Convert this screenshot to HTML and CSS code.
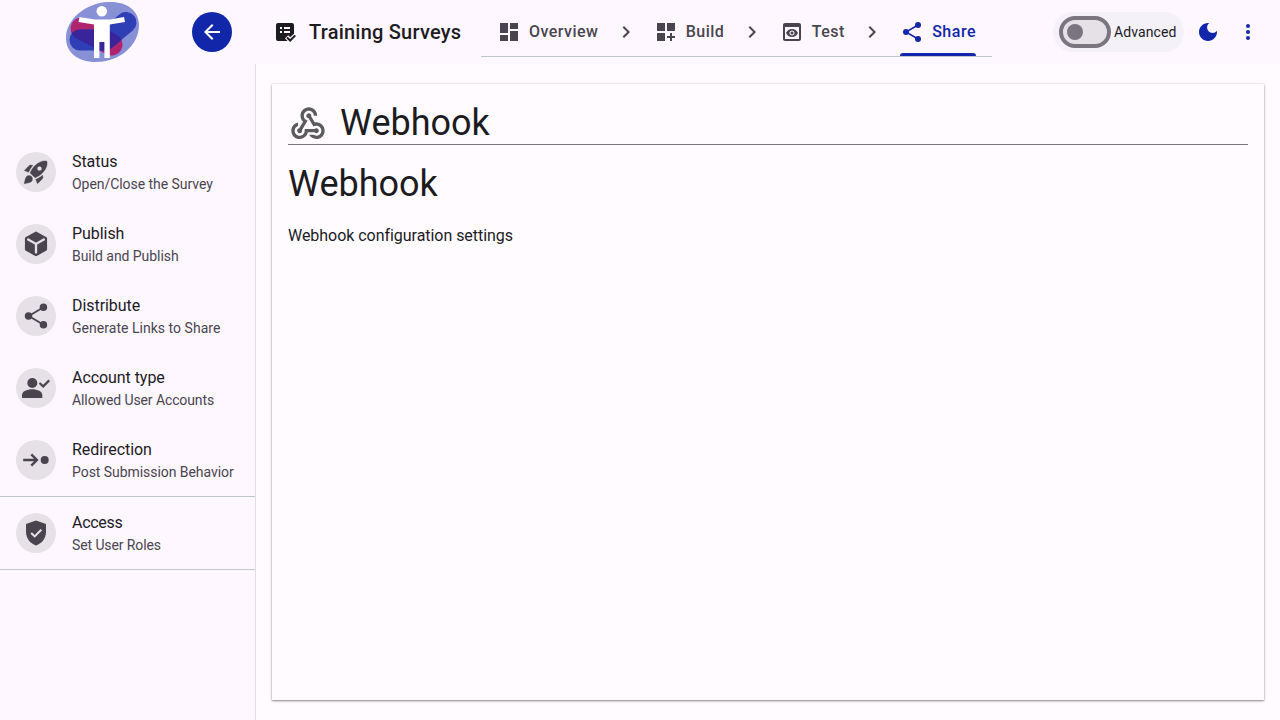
FILE: index.html
```html
<!DOCTYPE html>
<html lang="en">
<head>
<meta charset="utf-8">
<title>Training Surveys</title>
<link rel="stylesheet" href="styles.css">
</head>
<body>
<header class="header">
  <div class="brand">
    <svg class="logo" width="76" height="62" viewBox="0 0 76 62">
      <defs><clipPath id="capsule"><rect x="-28" y="-11" width="56" height="22" rx="11" transform="translate(31.5 35.5) rotate(28)"/></clipPath></defs>
      <path fill="#8890d6" d="M43 1C61 0 74 9 74 24C74 44 55 61 31 61C12 61 1 51 1 37C1 18 21 2 43 1Z"/>
      <rect fill="#b0246e" x="-28" y="-11" width="56" height="22" rx="11" transform="translate(31.5 35.5) rotate(28)"/>
      <path d="M15 39H40L61 21.5" fill="none" stroke="#2e3eb5" stroke-width="21" stroke-linecap="round" stroke-linejoin="round"/>
      <path clip-path="url(#capsule)" d="M15 39H40L61 21.5" fill="none" stroke="#3a249a" stroke-width="21" stroke-linecap="round" stroke-linejoin="round"/>
      <circle cx="36.8" cy="10.3" r="5.3" fill="#fff"/>
      <path fill="#fff" d="M14.5 16L30 18.5H45L59 16L60 21L44.8 23.5V57H39.4V41H34.4V57H29V23.5L13.5 21Z"/>
    </svg>
    <button class="back" aria-label="Back"><svg width="24" height="24" viewBox="0 0 24 24"><path fill="none" stroke="#fff" stroke-width="2" d="M12.7 4.7L5.4 12L12.7 19.3M5.4 12H20"/></svg></button>
  </div>
  <div class="title">
    <svg width="24" height="24" viewBox="0 0 24 24"><path fill="currentColor" d="M5 3H19A2 2 0 0 1 21 5V13.8L17.2 17.2L15.2 15.2L12 18.4L14.6 21H5A2 2 0 0 1 3 19V5A2 2 0 0 1 5 3Z"/><path fill="#fef7ff" d="M7 7h2v2H7zM11 7h6v2h-6zM7 11h2v2H7zM11 11h6v2h-6z"/><path fill="none" stroke="currentColor" stroke-width="2" d="M14 17.5L17.2 20.5L22.3 15.4"/></svg>
    <span>Training Surveys</span>
  </div>
  <nav class="tabs">
    <a class="tab overview"><svg width="24" height="24" viewBox="0 0 24 24"><path fill="currentColor" d="M3 13h8V3H3zm0 8h8v-6H3zm10 0h8V11h-8zm0-18v6h8V3z"/></svg><span>Overview</span></a>
    <svg class="chevron" width="24" height="24" viewBox="0 0 24 24"><path fill="currentColor" d="M10 6L8.59 7.41 13.17 12l-4.58 4.59L10 18l6-6z"/></svg>
    <a class="tab build"><svg width="24" height="24" viewBox="0 0 24 24"><path fill="currentColor" d="M3 3h8v8H3zm10 0h8v8h-8zM3 13h8v8H3zm13 0h2v3h3v2h-3v3h-2v-3h-3v-2h3z"/></svg><span>Build</span></a>
    <svg class="chevron" width="24" height="24" viewBox="0 0 24 24"><path fill="currentColor" d="M10 6L8.59 7.41 13.17 12l-4.58 4.59L10 18l6-6z"/></svg>
    <a class="tab test"><svg width="24" height="24" viewBox="0 0 24 24"><path fill="currentColor" d="M19 3H5c-1.11 0-2 .9-2 2v14c0 1.1.89 2 2 2h14c1.1 0 2-.9 2-2V5c0-1.1-.9-2-2-2zm0 16H5V7h14v12zm-5.5-6c0 .83-.67 1.5-1.5 1.5s-1.5-.67-1.5-1.5.67-1.5 1.5-1.5 1.5.67 1.5 1.5zM12 9c-2.73 0-5.06 1.66-6 4 .94 2.34 3.27 4 6 4s5.06-1.66 6-4c-.94-2.34-3.27-4-6-4zm0 6.5c-1.38 0-2.5-1.12-2.5-2.5s1.12-2.5 2.5-2.5 2.5 1.12 2.5 2.5-1.12 2.5-2.5 2.5z"/></svg><span>Test</span></a>
    <svg class="chevron" width="24" height="24" viewBox="0 0 24 24"><path fill="currentColor" d="M10 6L8.59 7.41 13.17 12l-4.58 4.59L10 18l6-6z"/></svg>
    <a class="tab share active"><svg width="24" height="24" viewBox="0 0 24 24"><path fill="none" stroke="currentColor" stroke-width="1.5" d="M18 5L6 12L18 19"/><g fill="currentColor"><circle cx="18" cy="5" r="3"/><circle cx="6" cy="12" r="3"/><circle cx="18" cy="19" r="3"/></g></svg><span>Share</span></a>
  </nav>
  <div class="actions">
    <label class="advanced"><span class="switch"><span class="knob"></span></span><span>Advanced</span></label>
    <button class="icon-button moon" aria-label="Dark mode"><svg width="24" height="24" viewBox="0 0 24 24"><path fill="currentColor" d="M12 3c-4.97 0-9 4.03-9 9s4.03 9 9 9 9-4.03 9-9c0-.46-.04-.92-.1-1.36-.98 1.37-2.58 2.26-4.4 2.26-2.98 0-5.4-2.42-5.4-5.4 0-1.81.89-3.42 2.26-4.4C12.92 3.04 12.46 3 12 3z"/></svg></button>
    <button class="icon-button" aria-label="More"><svg width="24" height="24" viewBox="0 0 24 24" fill="currentColor"><circle cx="12" cy="6" r="2"/><circle cx="12" cy="12" r="2"/><circle cx="12" cy="18" r="2"/></svg></button>
  </div>
</header>
<div class="layout">
  <aside class="sidebar">
    <a class="item"><span class="avatar"><svg width="28" height="28" viewBox="0 0 24 24"><path fill="currentColor" stroke="currentColor" stroke-width=".35" d="M9.19,6.35c-2.04,2.29-3.44,5.58-3.57,5.89L2,10.69l4.05-4.05c0.47-0.47,1.15-0.68,1.81-0.55L9.19,6.35z M11.17,17c0,0,3.74-1.55,5.89-3.7c5.4-5.4,4.5-9.62,4.21-10.57c-0.95-0.3-5.17-1.19-10.57,4.21C8.55,9.09,7,12.83,7,12.83L11.17,17z M17.65,14.81c-2.29,2.04-5.58,3.44-5.89,3.57L13.31,22l4.05-4.05c0.47-0.47,0.68-1.15,0.55-1.81L17.65,14.81z M9,18c0,0.83-0.34,1.58-0.88,2.12C6.94,21.3,2,22,2,22s0.7-4.94,1.88-6.12C4.42,15.34,5.17,15,6,15C7.66,15,9,16.34,9,18z M13,9c0-1.1,0.9-2,2-2s2,0.9,2,2s-0.9,2-2,2S13,10.1,13,9z"/></svg></span><span class="text"><span class="name">Status</span><span class="note">Open/Close the Survey</span></span></a>
    <a class="item"><span class="avatar"><svg width="28" height="28" viewBox="0 0 24 24"><path fill="currentColor" stroke="currentColor" stroke-width="2" stroke-linejoin="round" d="M12 2.4L20.5 7.1V16.8L12 21.5L3.5 16.8V7.1Z"/><path fill="none" stroke="#e6e1e6" stroke-width="2" stroke-linecap="round" d="M5.3 8.2L12 12L18.7 8.2M12 12V19.3"/></svg></span><span class="text"><span class="name">Publish</span><span class="note">Build and Publish</span></span></a>
    <a class="item"><span class="avatar"><svg width="28" height="28" viewBox="0 0 24 24"><path fill="none" stroke="currentColor" stroke-width="1.6" d="M18.5 4.5L5.8 12L18.5 19.5"/><g fill="currentColor"><circle cx="18.4" cy="4.5" r="3.2"/><circle cx="5.6" cy="12" r="3.2"/><circle cx="18.4" cy="19.5" r="3.2"/></g></svg></span><span class="text"><span class="name">Distribute</span><span class="note wide">Generate Links to Share</span></span></a>
    <a class="item"><span class="avatar"><svg width="28" height="28" viewBox="0 0 28 28"><g fill="currentColor"><circle cx="10.3" cy="9" r="5"/><path d="M0 24V21C0 17.5 5 15.3 10.2 15.3S20.3 17.5 20.3 21V24Z"/></g><path fill="none" stroke="currentColor" stroke-width="2.2" d="M17.5 9L21.2 12.4L27.2 6.4"/></svg></span><span class="text"><span class="name">Account type</span><span class="note tight">Allowed User Accounts</span></span></a>
    <a class="item"><span class="avatar"><svg width="28" height="28" viewBox="0 0 28 28"><circle fill="currentColor" cx="22.7" cy="14" r="4"/><path fill="none" stroke="currentColor" stroke-width="2.4" d="M1.2 14H14.5M9.3 8.4L14.9 14L9.3 19.6"/></svg></span><span class="text"><span class="name">Redirection</span><span class="note">Post Submission Behavior</span></span></a>
    <hr class="rule">
    <a class="item"><span class="avatar"><svg width="28" height="28" viewBox="0 0 28 28"><path fill="currentColor" d="M14 1.4L24 5.1V12.8C24 19.1 20.1 24.4 14 26.6C7.9 24.4 4 19.1 4 12.8V5.1Z"/><path fill="none" stroke="#e6e1e6" stroke-width="2.1" d="M9.2 14L12.7 17.4L19.3 10.8"/></svg></span><span class="text"><span class="name access">Access</span><span class="note tight">Set User Roles</span></span></a>
    <hr class="rule">
  </aside>
  <main class="main">
    <section class="card">
      <div class="card-header">
        <svg class="card-icon" width="40" height="40" viewBox="0 0 24 24"><path fill="#5b5b5e" d="M10,15l5.88,0c0.27-0.31,0.67-0.5,1.12-0.5c0.83,0,1.5,0.67,1.5,1.5c0,0.83-0.67,1.5-1.5,1.5c-0.44,0-0.84-0.19-1.12-0.5l-3.98,0c-0.46,2.28-2.48,4-4.9,4c-2.76,0-5-2.24-5-5c0-2.42,1.72-4.44,4-4.9l0,2.07C4.84,13.58,4,14.7,4,16c0,1.65,1.35,3,3,3s3-1.35,3-3V15z M12.5,4c1.65,0,3,1.35,3,3h2c0-2.76-2.24-5-5-5c-2.76,0-5,2.24-5,5c0,1.43,0.6,2.71,1.55,3.62l-2.35,3.9C6.02,14.66,5.5,15.27,5.5,16c0,0.83,0.67,1.5,1.5,1.5s1.5-0.67,1.5-1.5c0-0.16-0.02-0.31-0.07-0.45l3.38-5.63C10.49,9.61,9.5,8.42,9.5,7C9.5,5.35,10.85,4,12.5,4z M17,13c-0.64,0-1.23,0.2-1.72,0.54l-3.05-5.07C11.53,8.35,11,7.74,11,7c0-0.83,0.67-1.5,1.5-1.5S14,6.17,14,7c0,0.15-0.02,0.29-0.06,0.43l2.19,3.65C16.41,11.03,16.7,11,17,11l0,0c2.76,0,5,2.24,5,5c0,2.76-2.24,5-5,5c-1.85,0-3.47-1.01-4.33-2.5l2.67,0C15.82,18.82,16.39,19,17,19c1.65,0,3-1.35,3-3S18.65,13,17,13z"/></svg>
        <h1 class="heading">Webhook</h1>
      </div>
      <h2 class="heading second">Webhook</h2>
      <p class="body-text">Webhook configuration settings</p>
    </section>
  </main>
</div>
</body>
</html>
```
FILE: styles.css
```css
* { box-sizing: border-box; }
body {
  margin: 0;
  height: 720px;
  overflow: hidden;
  display: flex;
  flex-direction: column;
  background: #fef7ff;
  color: #1c1b1f;
  font-family: Roboto, "Liberation Sans", sans-serif;
}
svg { display: block; flex: none; }
button { border: 0; padding: 0; background: none; }
.header { display: flex; height: 64px; flex: none; }
.brand { display: flex; width: 273px; padding-left: 65px; align-items: center; }
.logo { width: 76px; }
.back {
  display: grid;
  place-items: center;
  width: 40px;
  height: 40px;
  margin-left: 51px;
  border-radius: 50%;
  background: #1226aa;
}
.title {
  display: flex;
  align-items: center;
  gap: 12px;
  width: 208px;
  font-size: 20px;
  font-weight: 500;
  letter-spacing: .22px;
  white-space: nowrap;
}
.tabs {
  display: flex;
  width: 511px;
  height: 57px;
  padding: 0 16px;
  border-bottom: 1px solid #bfc8c9;
  justify-content: space-between;
  color: #49454e;
}
.tab {
  display: flex;
  align-items: center;
  height: 56px;
  gap: 8px;
  padding-top: 8px;
  font-size: 16px;
  font-weight: 500;
  letter-spacing: .45px;
}
.tab span { margin-top: -2px; }
.share { letter-spacing: .5px; }
.chevron { margin-top: 20px; }
.active { position: relative; color: #1226aa; }
.active::after {
  content: "";
  position: absolute;
  left: 0;
  right: 0;
  bottom: 0;
  height: 3px;
  border-radius: 3px 3px 0 0;
  background: #1226aa;
}
.actions { display: flex; align-items: center; margin-left: 61px; }
.advanced {
  display: flex;
  align-items: center;
  gap: 3px;
  width: 131px;
  height: 40px;
  padding-left: 6px;
  border-radius: 20px;
  background: #f5f1f8;
  font-size: 14px;
  letter-spacing: .1px;
}
.switch {
  display: flex;
  align-items: center;
  width: 52px;
  height: 32px;
  padding-left: 4px;
  border: 4px solid #7a757f;
  border-radius: 16px;
  background: #e6e1e6;
}
.knob { width: 16px; height: 16px; border-radius: 50%; background: #7a757f; }
.icon-button { display: grid; place-items: center; width: 40px; height: 40px; color: #1226aa; }
.moon { margin-left: 4px; }
.layout { display: flex; flex: 1; }
.sidebar { width: 256px; padding-top: 72px; border-right: 1px solid #e2dce4; }
.item { display: flex; gap: 16px; height: 72px; padding: 16px 16px 0; }
.avatar {
  display: grid;
  place-items: center;
  flex: none;
  width: 40px;
  height: 40px;
  border-radius: 50%;
  background: #e6e1e6;
  color: #49454e;
}
.text { display: flex; flex-direction: column; margin-top: -2px; white-space: nowrap; }
.name { font-size: 16px; line-height: 24px; letter-spacing: -.06px; }
.access { letter-spacing: -.3px; }
.note { font-size: 14px; line-height: 20px; color: #49454e; letter-spacing: -.05px; }
.wide { letter-spacing: .03px; }
.tight { letter-spacing: -.1px; }
.rule { height: 1px; margin: 0; border: 0; background: #bfc8c9; }
.main { display: flex; flex: 1; padding: 20px 16px; background: #fffbff; }
.card {
  flex: 1;
  padding: 16px;
  background: #fffbff;
  box-shadow: 0 1px 3px rgba(0, 0, 0, .28), 0 1px 1px rgba(0, 0, 0, .18), 0 0 1px rgba(0, 0, 0, .2);
}
.card-header {
  display: flex;
  align-items: center;
  gap: 12px;
  height: 45px;
  padding-top: 2px;
  border-bottom: 1px solid #7a757f;
}
.card-icon { margin-top: 2px; }
.heading { margin: 0; font-size: 36px; line-height: 44px; font-weight: 400; }
.second { margin-top: 17px; }
.body-text { margin: 18px 0 0; font-size: 16px; line-height: 24px; letter-spacing: -.04px; }
```
